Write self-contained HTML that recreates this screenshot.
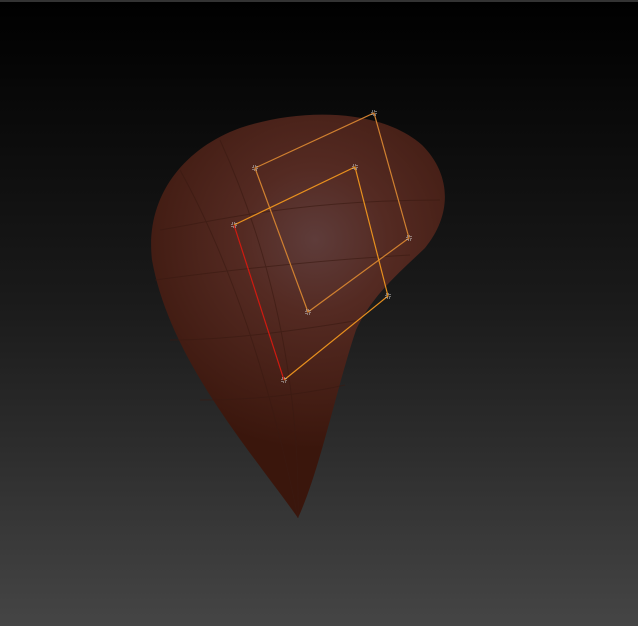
<!DOCTYPE html>
<html><head><style>
html,body{margin:0;padding:0;width:638px;height:626px;overflow:hidden}
body{background:linear-gradient(#000 0px,#050505 60px,#1a1a1a 300px,#2d2d2d 450px,#454545 626px);position:relative}
.top{position:absolute;left:0;top:0;width:638px;height:2px;background:#333}
svg{position:absolute;left:0;top:0}
</style></head><body>
<div class="top"></div>
<svg width="638" height="626" viewBox="0 0 638 626">
<defs>
<radialGradient id="g" cx="315" cy="240" r="210" gradientUnits="userSpaceOnUse">
<stop offset="0" stop-color="#5e3c3a"/>
<stop offset="0.35" stop-color="#542a22"/>
<stop offset="1" stop-color="#3a160c"/>
</radialGradient>
</defs>
<path d="M298,518 C250,450 170,360 152,260 C145,200 180,150 240,128 C300,108 380,108 422,145 C452,175 452,215 425,248 C400,272 372,295 356,330 C336,390 320,470 298,518 Z" fill="url(#g)"/>
<g stroke="#3a1a12" stroke-width="1" fill="none" opacity="0.6">
<path d="M180,170 C230,260 270,380 298,518"/>
<path d="M220,140 C270,250 300,380 298,518"/>
<path d="M160,230 C220,220 300,200 440,200"/>
<path d="M155,280 C230,270 320,260 410,255"/>
<path d="M170,340 C230,340 300,330 360,320"/>
<path d="M200,400 C250,400 300,395 345,385"/>
</g>
<g fill="none" stroke-width="1.2">
<polygon points="255,168 374,113 409,238 308,312" stroke="#d08030"/>
<polyline points="284,380 388,296 355,167 234,225" stroke="#e8901e"/>
<line x1="234" y1="225" x2="284" y2="380" stroke="#d01a10"/>
</g>
<g fill="none" stroke="#ccc" stroke-width="1" stroke-dasharray="1 1">
<rect x="253" y="166" width="4" height="4"/><rect x="372" y="111" width="4" height="4"/>
<rect x="407" y="236" width="4" height="4"/><rect x="306" y="310" width="4" height="4"/>
<rect x="232" y="223" width="4" height="4"/><rect x="353" y="165" width="4" height="4"/>
<rect x="386" y="294" width="4" height="4"/><rect x="282" y="378" width="4" height="4"/>
</g>
</svg>
</body></html>
